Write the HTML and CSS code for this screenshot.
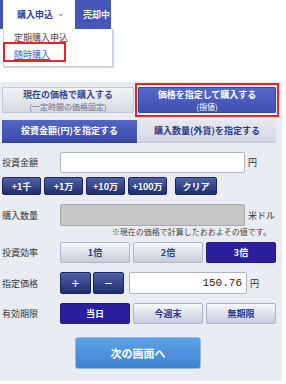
FILE: index.html
```html
<!doctype html>
<html lang="ja">
<head>
  <meta charset="UTF-8">
  <title>随時購入</title>
  <meta name="viewport" content="width=device-width, initial-scale=1">
  <link rel="stylesheet" href="styles.css">
</head>
<body>
  <nav class="topnav">
    <span class="edge"></span>
    <a href="#" class="tab open">購入申込 <span class="chev">&#8964;</span></a>
    <a href="#" class="tab sell">売却中</a>
  </nav>
  <menu class="dropdown">
    <li><a href="#">定期購入申込</a></li>
    <li class="mark"><a href="#" class="current">随時購入</a></li>
  </menu>

  <form class="order">
    <div class="mode">
      <button type="button" class="mode_btn"><span>現在の価格で購入する</span><small>(一定時間の価格固定)</small></button>
      <button type="button" class="mode_btn on mark"><span>価格を指定して購入する</span><small>(指値)</small></button>
    </div>

    <div class="tabs">
      <button type="button" class="tab_btn on">投資金額(円)を指定する</button>
      <button type="button" class="tab_btn">購入数量(外貨)を指定する</button>
    </div>

    <div class="row amount">
      <label>投資金額</label>
      <input type="text" class="field">
      <span class="unit">円</span>
    </div>
    <div class="row adds">
      <span></span>
      <div class="add_btns">
        <button type="button" class="navy">+1千</button>
        <button type="button" class="navy">+1万</button>
        <button type="button" class="navy">+10万</button>
        <button type="button" class="navy">+100万</button>
        <button type="button" class="navy clear">クリア</button>
      </div>
    </div>

    <div class="row qty">
      <label>購入数量</label>
      <input type="text" class="field disabled" disabled>
      <span class="unit">米ドル</span>
    </div>
    <p class="note">※現在の価格で計算したおおよその値です。</p>

    <div class="row lev">
      <label>投資効率</label>
      <div class="choice">
        <button type="button" class="light">1倍</button>
        <button type="button" class="light">2倍</button>
        <button type="button" class="sel">3倍</button>
      </div>
    </div>

    <div class="row price">
      <label>指定価格</label>
      <div class="stepper">
        <button type="button" class="navy">+</button>
        <button type="button" class="navy">&minus;</button>
        <input type="text" class="field num" value="150.76">
      </div>
      <span class="unit">円</span>
    </div>

    <div class="row term">
      <label>有効期限</label>
      <div class="choice">
        <button type="button" class="sel">当日</button>
        <button type="button" class="light">今週末</button>
        <button type="button" class="light">無期限</button>
      </div>
    </div>

    <div class="next_wrap">
      <button type="button" class="next">次の画面へ</button>
    </div>
  </form>
</body>
</html>
```

FILE: styles.css
```css
body { margin: 0; width: 286px; background: #fff; font-family: "Noto Sans CJK JP", "Noto Sans", sans-serif; color: #333; }
button { font-family: inherit; cursor: pointer; padding: 0; }

.topnav { display: flex; height: 29px; }
.topnav .edge { width: 3px; background: #3f52b5; }
.tab { display: flex; align-items: center; text-decoration: none; font-size: 9px; font-weight: bold; }
.tab.open { width: 58px; padding-left: 14px; background: #fff; color: #34408e; }
.tab.open .chev { font-weight: normal; color: #777; margin: -5px 0 0 4px; font-size: 9px; }
.tab.sell { width: 28px; padding-left: 8px; background: #4456b8; color: #fff; overflow: hidden; white-space: nowrap; }

.dropdown { position: absolute; left: 3px; top: 29px; width: 108px; height: 37px; margin: 0; padding: 0; background: #fff; border: 1px solid #c9cfe0; border-top: 0; box-shadow: 1px 1px 1px #d8dce8; }
.dropdown li { list-style-type: none; padding: 0 0 0 10px; height: 17px; line-height: 17px; font-size: 9px; }
.dropdown a { color: #444; text-decoration: none; }
.dropdown a.current { color: #3a5bd0; text-decoration: underline; }
.mark { position: relative; }
.dropdown li.mark::after { content: ""; position: absolute; left: -1px; top: -4px; width: 59px; height: 16px; border: 2px solid #e4262b; }

.order { margin: 53px 0 0 0; width: 276px; padding: 5px 6px 12px 0; background: #e9ecf3; display: flex; flex-direction: column; }

.mode { display: flex; gap: 4px; padding-left: 2px; }
.mode_btn { flex: 1; height: 26px; border: 1px solid #c4c9d6; border-radius: 1px; font-size: 9px; font-weight: bold; display: flex; flex-direction: column; align-items: center; justify-content: center; background: linear-gradient(#f3f4f7, #d5d9e2); color: #3a4791; }
.mode_btn span { display: block; line-height: 13px; }
.mode_btn:first-child { flex: 0 0 132px; }
.mode_btn small { display: block; font-size: 8px; line-height: 12px; font-weight: normal; color: #6a7090; }
.mode_btn.on { background: linear-gradient(#5569cb, #3d50b2); border-color: #3a4ba6; color: #fff; }
.mode_btn.on small { color: #fff; }
.mode_btn.mark::after { content: ""; position: absolute; left: -4px; top: -5px; right: -4px; bottom: -5px; border: 2px solid #e4262b; }

.tabs { display: flex; gap: 1px; margin: 7px 0 0 2px; height: 21px; border-bottom: 2px solid #c9d0e2; }
.tab_btn { flex: 1; border: 0; font-size: 9px; font-weight: bold; background: linear-gradient(#e6e9f1, #d3d8e4); color: #2c3a8e; }
.tab_btn.on { flex: 0 0 135px; background: linear-gradient(#5266c6, #3b4eae); color: #fff; box-shadow: 0 2px 0 #3346a8; }

.row { display: flex; align-items: center; padding-left: 2px; }
.row label { flex: 0 0 58px; font-size: 9px; color: #333; }
.row .unit { font-size: 9px; color: #333; margin-left: 3px; }
.field { width: 183px; height: 19px; border: 1px solid #aeb3bf; border-radius: 2px; background: #fff; padding: 0; box-sizing: content-box; }
.field.disabled { background: #c6c6c6; border-color: #a9a9a9; height: 20px; }

.amount { margin-top: 9px; }
.adds { margin-top: 4px; }
.add_btns { display: flex; gap: 3px; }
.navy { height: 18px; border: 1px solid #1a2560; border-radius: 2px; background: linear-gradient(#4e62a8, #1f2d6c); color: #fff; font-size: 9px; font-weight: bold; }
.add_btns .navy { width: 39px; }
.add_btns .clear { width: 42px; margin-left: 5px; }

.qty { margin-top: 9px; }
.note { margin: 1px 0 0 0; text-align: right; font-size: 8px; color: #444; padding-right: 5px; line-height: 10px; }

.choice { display: flex; gap: 3px; }
.choice button { width: 70px; height: 21px; font-size: 9px; font-weight: bold; border-radius: 2px; }
.light { border: 1px solid #aeb6c9; background: linear-gradient(#f7f8fb, #c6ccdb); color: #2b3a93; }
.sel { border: 1px solid #241a88; background: #2b1e9c; color: #fff; }

.lev { margin-top: 5px; }
.price { margin-top: 9px; }
.stepper { display: flex; gap: 2px; align-items: center; }
.stepper .navy { width: 31px; height: 22px; font-size: 14px; font-weight: normal; line-height: 18px; }
.stepper .field.num { width: 112px; margin-left: 3px; height: 20px; text-align: right; font-family: "Liberation Mono", "DejaVu Sans Mono", monospace; font-size: 11px; color: #222; padding-right: 4px; }
.term { margin-top: 9px; }

.next_wrap { display: flex; padding-left: 75px; margin-top: 13px; }
.next { width: 126px; height: 32px; border: 1px solid #9ab8de; border-radius: 3px; background: linear-gradient(#5aa3ea, #3e83cf); color: #fff; font-size: 11px; font-weight: bold; }
```
